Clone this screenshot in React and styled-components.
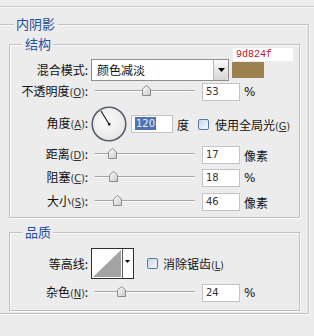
import React from "react";
import styled, { createGlobalStyle } from "styled-components";

const GlobalStyle = createGlobalStyle`
  html, body { margin: 0; padding: 0; background: #ececec; }
  body {
    font-family: "Noto Sans CJK SC", "Noto Sans", sans-serif;
    font-size: 12px;
    color: #111;
    overflow: hidden;
  }
`;

const Page = styled.div`
  width: 314px;
  height: 336px;
  padding-top: 6px;
  box-sizing: border-box;
  overflow: hidden;
`;

const TopRule = styled.div`
  height: 0;
  border-top: 1px solid #c6c6c6;
  border-bottom: 1px solid #fafafa;
`;

const Group = styled.div`
  position: relative;
  box-sizing: border-box;
  border: 1px solid #c2c2c2;
  box-shadow: inset 1px 1px 0 #fbfbfb, 1px 1px 0 #fbfbfb;
  margin: ${(p) => p.$m};
  padding: ${(p) => p.$p};
  width: ${(p) => p.$w}px;
`;

const Legend = styled.span`
  position: absolute;
  top: -9px;
  left: ${(p) => p.$left}px;
  padding: 0 2px;
  background: #ececec;
  color: #1f4f9e;
  font-size: 13px;
  line-height: 16px;
`;

const Row = styled.div`
  display: flex;
  align-items: ${(p) => p.$align || "center"};
  gap: 3px;
  height: ${(p) => p.$h}px;
  margin-top: ${(p) => p.$mt || 0}px;
`;

const Label = styled.div`
  width: 78px;
  flex: none;
  text-align: right;
  white-space: nowrap;
  line-height: ${(p) => p.$lh || 16}px;
  margin-top: ${(p) => p.$mt || 0}px;
  color: #111;
`;

const Key = styled.span`
  font-family: "DejaVu Sans", "Liberation Sans", sans-serif;
  font-size: 10px;
  color: #333;
  letter-spacing: -0.2px;
  u { text-decoration: underline; text-underline-offset: 1px; }
`;

const Select = styled.div`
  flex: none;
  box-sizing: border-box;
  width: 138px;
  height: 22px;
  margin-top: 11px;
  border: 1px solid #8d8d8d;
  background: #fff;
  display: flex;
  align-items: center;
  padding-left: 5px;
`;

const SelectText = styled.span`
  flex: 1;
  line-height: 16px;
`;

const SelectButton = styled.div`
  width: 14px;
  height: 20px;
  border-left: 1px solid #b8b8b8;
  border-radius: 0 3px 3px 0;
  background: linear-gradient(#fbfbfb, #d6d6d6);
  display: flex;
  align-items: center;
  justify-content: center;
`;

const ColorCol = styled.div`
  display: flex;
  flex-direction: column;
  flex: none;
`;

const HexBox = styled.div`
  width: 60px;
  height: 13px;
  margin-left: 1px;
  background: #fff;
  color: #c4122e;
  font-family: "Liberation Mono", "DejaVu Sans Mono", monospace;
  font-size: 10px;
  line-height: 13px;
  padding-left: 3px;
  box-sizing: border-box;
`;

const Swatch = styled.div`
  width: 32px;
  height: 16px;
  margin-top: 1px;
  background: #9d824f;
`;

const SliderBox = styled.div`
  position: relative;
  flex: none;
  width: 108px;
  height: 18px;
  &::before {
    content: "";
    position: absolute;
    left: 4px;
    right: 4px;
    top: 7px;
    height: 1px;
    background: #a4a4a4;
    border-radius: 1px;
    box-shadow: 0 1px 0 #fdfdfd, -1px 0 0 #c8c8c8;
  }
`;

const Thumb = styled.svg`
  position: absolute;
  top: 2px;
  left: ${(p) => p.$x - 4.5}px;
`;

const NumInput = styled.div`
  flex: none;
  box-sizing: border-box;
  width: ${(p) => p.$w || 38}px;
  height: 18px;
  margin-left: ${(p) => p.$ml || 0}px;
  border: 1px solid #c3c3c3;
  background: #fff;
  padding-left: 3px;
  font-family: "DejaVu Sans", "Liberation Sans", sans-serif;
  font-size: 10px;
  line-height: 16px;
  color: #333;
`;

const Selected = styled.span`
  background: #4f72b0;
  color: #eaf0fb;
  padding: 1px 1px;
`;

const Unit = styled.span`
  font-size: 12px;
  color: #111;
  font-family: ${(p) =>
    p.$latin ? '"DejaVu Sans", sans-serif' : '"Noto Sans CJK SC", sans-serif'};
  margin-left: ${(p) => p.$ml || 0}px;
`;

const Check = styled.span`
  flex: none;
  box-sizing: border-box;
  width: 11px;
  height: 11px;
  margin-left: ${(p) => p.$ml || 0}px;
  border: 1px solid #5877a8;
  border-radius: 2px;
  background: linear-gradient(135deg, #c9d6ea, #f6f8fc);
`;

const CheckText = styled.span`
  margin-left: ${(p) => p.$ml || 2}px;
  white-space: nowrap;
`;

const Contour = styled.div`
  flex: none;
  box-sizing: border-box;
  width: 43px;
  height: 31px;
  border: 1px solid #2e2e2e;
  background: #fff;
  display: flex;
`;

const ContourArrow = styled.div`
  width: 10px;
  border-left: 1px solid #5a5a5a;
  display: flex;
  justify-content: center;
  padding-top: 11px;
  box-sizing: border-box;
`;

const SliderThumb = ({ x }) => (
  <Thumb $x={x} width="9" height="11" viewBox="0 0 9 11">
    <defs>
      <linearGradient id="tg" x1="0" y1="0" x2="1" y2="1">
        <stop offset="0" stopColor="#ffffff" />
        <stop offset="1" stopColor="#c9c9c9" />
      </linearGradient>
    </defs>
    <path d="M0.5 4 L4.5 0.5 L8.5 4 V10.5 H0.5 Z" fill="url(#tg)" stroke="#8c8c8c" />
  </Thumb>
);

const Slider = ({ x }) => (
  <SliderBox>
    <SliderThumb x={x} />
  </SliderBox>
);

const K = ({ k }) => (
  <Key>
    (<u>{k}</u>)
  </Key>
);

const Dial = () => (
  <svg width="36" height="36" viewBox="0 0 36 36" style={{ flex: "none" }}>
    <defs>
      <radialGradient id="dg" cx="0.45" cy="0.4" r="0.6">
        <stop offset="0" stopColor="#fcfcfc" />
        <stop offset="1" stopColor="#e6e6e6" />
      </radialGradient>
    </defs>
    <circle cx="18" cy="18" r="16.8" fill="url(#dg)" stroke="#56606e" strokeWidth="1.6" />
    <line x1="18" y1="18" x2="10" y2="5" stroke="#111" strokeWidth="1.1" />
    <rect x="17" y="17" width="2.4" height="2.4" fill="#111" />
  </svg>
);

export default function App() {
  return (
    <>
      <GlobalStyle />
      <Page>
        <TopRule />
        <Group $m="16px 0 0 -2px" $w={311} $p="0 0 2px 0">
          <Legend $left={15}>内阴影</Legend>

          <Group $m="19px 0 0 10px" $w={291} $p="3px 0 6px 0">
            <Legend $left={13}>结构</Legend>

            <Row $h={33} $align="flex-start">
              <Label $lh={22} $mt={11}>混合模式:</Label>
              <Select>
                <SelectText>颜色减淡</SelectText>
                <SelectButton>
                  <svg width="7" height="4" viewBox="0 0 7 4">
                    <path d="M0 0 H7 L3.5 4 Z" fill="#000" />
                  </svg>
                </SelectButton>
              </Select>
              <ColorCol>
                <HexBox>9d824f</HexBox>
                <Swatch />
              </ColorCol>
            </Row>

            <Row $h={18} $mt={2}>
              <Label>
                不透明度<K k="O" />:
              </Label>
              <Slider x={55} />
              <NumInput>53</NumInput>
              <Unit $latin $ml={1}>%</Unit>
            </Row>

            <Row $h={36} $mt={5}>
              <Label>
                角度<K k="A" />:
              </Label>
              <Dial />
              <NumInput $w={42} $ml={1}>
                <Selected>120</Selected>
              </NumInput>
              <Unit $ml={1}>度</Unit>
              <Check $ml={6} />
              <CheckText $ml={3}>
                使用全局光<K k="G" />
              </CheckText>
            </Row>

            <Row $h={18} $mt={4}>
              <Label>
                距离<K k="D" />:
              </Label>
              <Slider x={21} />
              <NumInput>17</NumInput>
              <Unit $ml={1}>像素</Unit>
            </Row>

            <Row $h={18} $mt={5}>
              <Label>
                阻塞<K k="C" />:
              </Label>
              <Slider x={22} />
              <NumInput>18</NumInput>
              <Unit $latin $ml={1}>%</Unit>
            </Row>

            <Row $h={18} $mt={6}>
              <Label>
                大小<K k="S" />:
              </Label>
              <Slider x={26} />
              <NumInput>46</NumInput>
              <Unit $ml={1}>像素</Unit>
            </Row>
          </Group>

          <Group $m="14px 0 0 10px" $w={291} $p="15px 0 8px 0">
            <Legend $left={13}>品质</Legend>

            <Row $h={31}>
              <Label>等高线:</Label>
              <Contour>
                <svg width="30" height="29" viewBox="0 0 30 29">
                  <path d="M1 28 L29 1 V28 Z" fill="#a3a3a3" />
                </svg>
                <ContourArrow>
                  <svg width="5" height="3" viewBox="0 0 5 3">
                    <path d="M0 0 H5 L2.5 3 Z" fill="#000" />
                  </svg>
                </ContourArrow>
              </Contour>
              <Check $ml={10} />
              <CheckText $ml={2}>
                消除锯齿<K k="L" />
              </CheckText>
            </Row>

            <Row $h={18} $mt={5}>
              <Label>
                杂色<K k="N" />:
              </Label>
              <Slider x={30} />
              <NumInput>24</NumInput>
              <Unit $latin $ml={1}>%</Unit>
            </Row>
          </Group>
        </Group>
      </Page>
    </>
  );
}
